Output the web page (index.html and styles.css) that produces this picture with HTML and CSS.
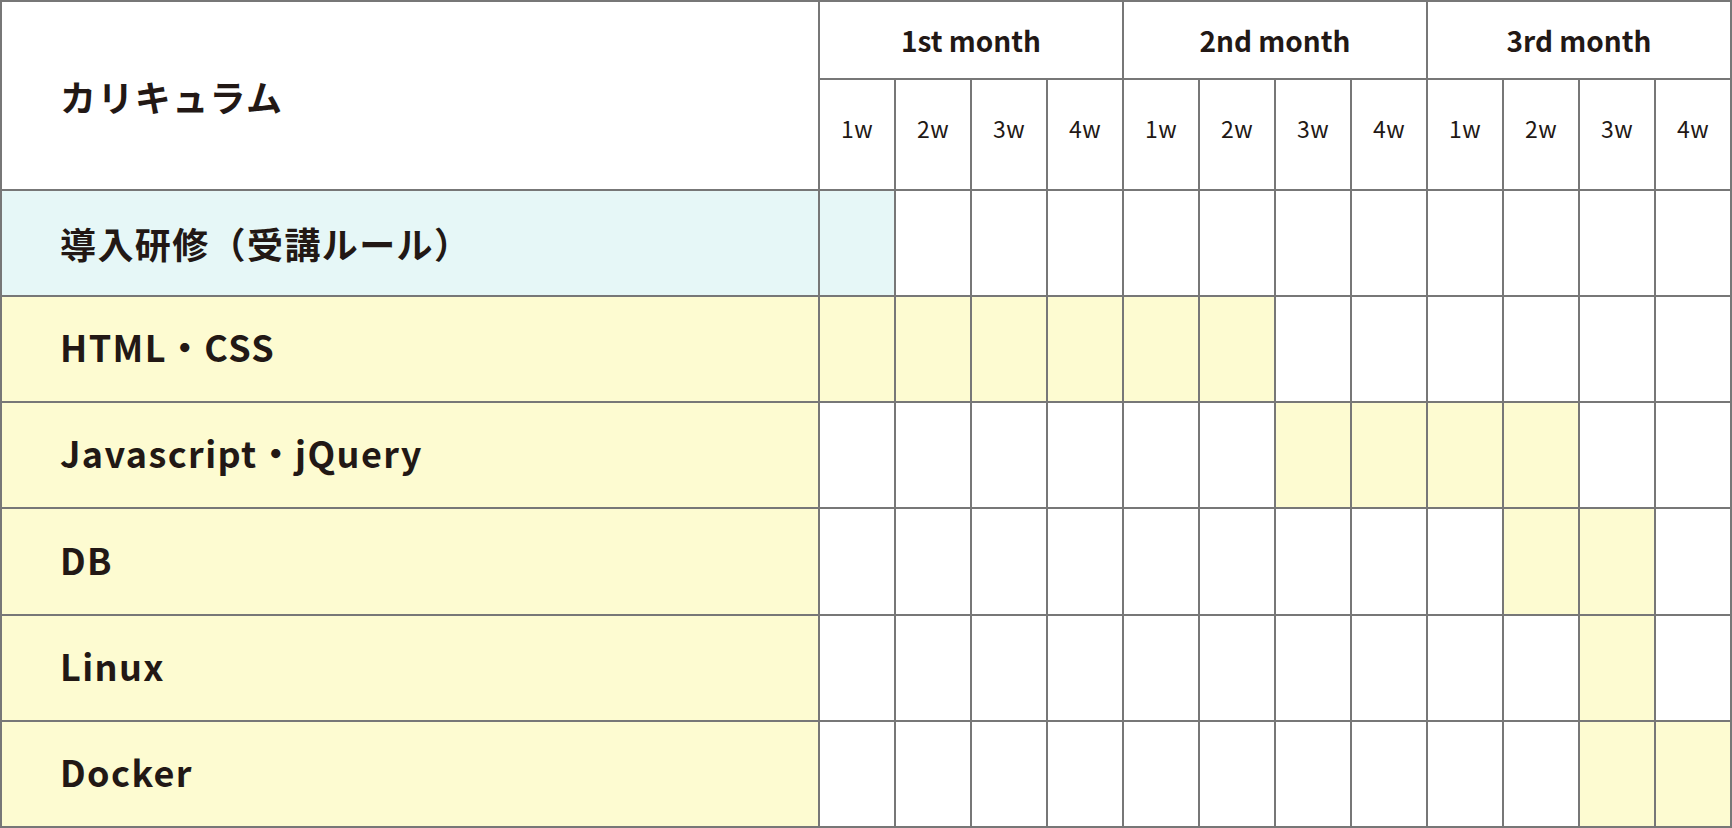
FILE: index.html
```html
<!DOCTYPE html>
<html lang="ja">
<head>
<meta charset="utf-8">
<title>カリキュラム</title>
<link rel="stylesheet" href="styles.css">
</head>
<body>
<div class="schedule">
  <div class="cell head-label">カリキュラム</div>
  <div class="cell month">1st month</div>
  <div class="cell month">2nd month</div>
  <div class="cell month">3rd month</div>
  <div class="cell week">1w</div><div class="cell week">2w</div><div class="cell week">3w</div><div class="cell week">4w</div>
  <div class="cell week">1w</div><div class="cell week">2w</div><div class="cell week">3w</div><div class="cell week">4w</div>
  <div class="cell week">1w</div><div class="cell week">2w</div><div class="cell week">3w</div><div class="cell week">4w</div>

  <div class="cell label intro">導入研修（受講ルール）</div>
  <div class="cell intro"></div><div class="cell"></div><div class="cell"></div><div class="cell"></div>
  <div class="cell"></div><div class="cell"></div><div class="cell"></div><div class="cell"></div>
  <div class="cell"></div><div class="cell"></div><div class="cell"></div><div class="cell"></div>

  <div class="cell label latin on">HTML・CSS</div>
  <div class="cell on"></div><div class="cell on"></div><div class="cell on"></div><div class="cell on"></div>
  <div class="cell on"></div><div class="cell on"></div><div class="cell"></div><div class="cell"></div>
  <div class="cell"></div><div class="cell"></div><div class="cell"></div><div class="cell"></div>

  <div class="cell label latin on">Javascript・jQuery</div>
  <div class="cell"></div><div class="cell"></div><div class="cell"></div><div class="cell"></div>
  <div class="cell"></div><div class="cell"></div><div class="cell on"></div><div class="cell on"></div>
  <div class="cell on"></div><div class="cell on"></div><div class="cell"></div><div class="cell"></div>

  <div class="cell label latin on">DB</div>
  <div class="cell"></div><div class="cell"></div><div class="cell"></div><div class="cell"></div>
  <div class="cell"></div><div class="cell"></div><div class="cell"></div><div class="cell"></div>
  <div class="cell"></div><div class="cell on"></div><div class="cell on"></div><div class="cell"></div>

  <div class="cell label latin on">Linux</div>
  <div class="cell"></div><div class="cell"></div><div class="cell"></div><div class="cell"></div>
  <div class="cell"></div><div class="cell"></div><div class="cell"></div><div class="cell"></div>
  <div class="cell"></div><div class="cell"></div><div class="cell on"></div><div class="cell"></div>

  <div class="cell label latin on">Docker</div>
  <div class="cell"></div><div class="cell"></div><div class="cell"></div><div class="cell"></div>
  <div class="cell"></div><div class="cell"></div><div class="cell"></div><div class="cell"></div>
  <div class="cell"></div><div class="cell"></div><div class="cell on"></div><div class="cell on"></div>
</div>
</body>
</html>
```

FILE: styles.css
```css
html, body {
  margin: 0;
  padding: 0;
  background: #ffffff;
}

body {
  font-family: "Noto Sans CJK JP", "Noto Sans", sans-serif;
  color: #221815;
}

.schedule {
  box-sizing: border-box;
  width: 1732px;
  height: 828px;
  display: grid;
  grid-template-columns: 816px repeat(12, 74px);
  grid-template-rows: 76px 109px repeat(6, 1fr);
  gap: 2px;
  padding: 2px;
  background: #777777;
}

.cell {
  background: #ffffff;
  display: flex;
  align-items: center;
  justify-content: center;
}

.head-label,
.label {
  justify-content: flex-start;
  padding-left: 58px;
  font-size: 36px;
  font-weight: 700;
  letter-spacing: 1.4px;
}

.latin {
  padding-bottom: 6px;
}

.head-label {
  grid-row: span 2;
}

.month {
  grid-column: span 4;
  font-size: 28px;
  font-weight: 700;
  letter-spacing: 0;
}

.week {
  font-size: 23px;
  font-weight: 400;
  letter-spacing: 0.02em;
  padding-bottom: 14px;
}

.intro {
  background: #e6f7f7;
}

.on {
  background: #fdfbd1;
}
```
